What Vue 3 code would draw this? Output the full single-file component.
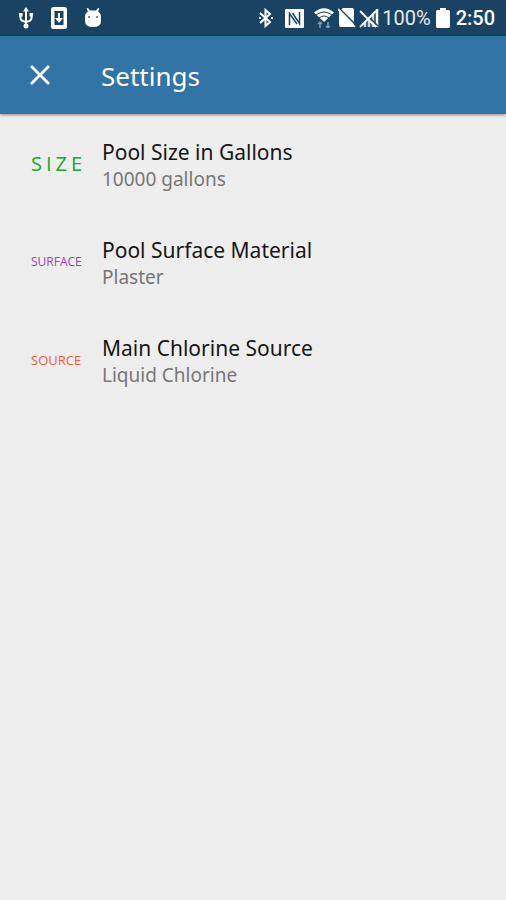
<script setup>
const settings = [
  { key: 'size', badge: 'SIZE', title: 'Pool Size in Gallons', value: '10000 gallons' },
  { key: 'surface', badge: 'SURFACE', title: 'Pool Surface Material', value: 'Plaster' },
  { key: 'source', badge: 'SOURCE', title: 'Main Chlorine Source', value: 'Liquid Chlorine' },
]
</script>

<template>
  <div class="screen">
    <div class="status">
      <div class="group left">
        <svg width="16" height="22" viewBox="0 0 16 22" fill="none" stroke="#fff" stroke-width="2">
          <path d="M8 3v15M2.500 8v3q0 3 5.500 4M13.500 8v3q0 3-5.500 4" />
          <path d="M8 0l3 4.500H5zM1 6h3.500v3.500H1zM11.500 6H15v3.500h-3.500z" fill="#fff" stroke="none" />
          <circle cx="8" cy="19" r="2.500" fill="#fff" stroke="none" />
        </svg>
        <svg width="16" height="22" viewBox="0 0 16 22">
          <rect width="16" height="22" rx="2.500" fill="#fff" />
          <path d="M3.500 4h9v14h-9z" fill="#194263" />
          <path d="M7 6h2v5h3l-4 5-4-5h3z" fill="#fff" />
        </svg>
        <svg width="18" height="20" viewBox="0 0 18 20">
          <path d="M1 9Q1 5 4 3.500L2.500.5 4 0l2 2.500h6L14 0l1.500.5L14 3.500Q17 5 17 9v4q0 6-8 6t-8-6z" fill="#fff" />
          <circle cx="5" cy="9" r="1" fill="#466982" />
          <circle cx="13" cy="9" r="1" fill="#466982" />
        </svg>
      </div>
      <div class="group right">
        <svg class="bluetooth" width="14" height="20" viewBox="0 0 14 20" fill="none" stroke="#fff" stroke-width="2">
          <path d="M1 5l10 9-4.500 4V2L11 6 1 15" />
          <path d="M0 9h2v2H0zM12 9h2v2h-2z" fill="#fff" stroke="none" />
        </svg>
        <svg class="nfc" width="19" height="19" viewBox="0 0 19 19">
          <rect width="19" height="19" rx="1" fill="#fff" />
          <path d="M4.500 16V4.500L12 15M7.500 4L14.500 14.500V3" fill="none" stroke="#194263" stroke-width="1.500" />
        </svg>
        <svg class="wifi" width="20" height="20" viewBox="0 0 20 20" fill="none">
          <path d="M0 4.500q10-8.500 20 0L10 14z" fill="#fff" />
          <path d="M2 7q8-6 16 0M5 10q5-4 10 0" stroke="#194263" stroke-width="1" />
          <path d="M6 20v-6M4 16l2-2 2 2M14 14v6M12 18l2 2 2-2" stroke="#7f9db4" stroke-width="1.500" />
        </svg>
        <svg class="sim" width="18" height="20" viewBox="0 0 18 20">
          <path d="M3 1.500L5 0h9q2 0 2 2v16q0 1-1 1H3q-2 0-2-2V4z" fill="#fff" />
          <path d="M2 1l16 16" stroke="#194263" stroke-width="1.500" />
          <path d="M0 1l17 18" stroke="#fff" stroke-width="1.800" />
        </svg>
        <svg class="signal" width="20" height="20" viewBox="0 0 20 20" fill="none">
          <path d="M6 19v-5M10 19V10M14 19V6" stroke="#cbd7e0" stroke-width="2.500" />
          <path d="M18 19V1" stroke="#fff" stroke-width="2.500" />
          <path d="M3 2l16 16" stroke="#194263" stroke-width="1.500" />
          <path d="M1 3l16 16M1 19L17 3" stroke="#fff" stroke-width="1.800" />
        </svg>
        <span class="percent">100%</span>
        <svg class="battery" width="14" height="20" viewBox="0 0 14 20" fill="#fff">
          <path d="M4 2V0h6v2h2.500q1.500 0 1.500 1.500v15q0 1.500-1.500 1.500h-11Q0 20 0 18.500v-15Q0 2 1.500 2z" />
        </svg>
        <time class="clock">2:50</time>
      </div>
    </div>
    <header class="bar">
      <button class="close" type="button" aria-label="Close">
        <svg width="20" height="20" viewBox="0 0 20 20" fill="none" stroke="#fff" stroke-width="2.800">
          <path d="M1 1l18 18M19 1L1 19" />
        </svg>
      </button>
      <h1>Settings</h1>
    </header>
    <main>
      <button v-for="item in settings" :key="item.key" class="row" type="button">
        <span class="badge" :class="item.key">{{ item.badge }}</span>
        <span class="text">
          <span class="title">{{ item.title }}</span>
          <span class="value">{{ item.value }}</span>
        </span>
      </button>
    </main>
  </div>
</template>

<style>
body {
  background: #eee;
}
</style>

<style scoped>
.screen {
  min-height: 100vh;
  background: #eee;
  font-family: "Noto Sans", "Open Sans", sans-serif;
}
.status {
  display: flex;
  justify-content: space-between;
  align-items: center;
  height: 36px;
  padding: 0 11px 0 18px;
  background: #194263;
  color: #fff;
  font-family: Roboto, sans-serif;
}
.group {
  display: flex;
  align-items: center;
}
.left {
  gap: 17px;
}
.nfc {
  margin-left: 12px;
}
.wifi {
  margin-left: 10px;
}
.sim {
  margin-left: 4px;
}
.signal {
  margin-left: 3px;
}
.percent {
  margin-left: 3px;
  font-size: 20px;
  line-height: 24px;
  color: #e3ebf1;
}
.battery {
  margin: 0 6px 0 5px;
}
.clock {
  font-size: 20px;
  line-height: 24px;
  font-weight: 500;
}
.bar {
  display: flex;
  align-items: center;
  height: 78px;
  padding-left: 20px;
  background: #3174a5;
  color: #fff;
  box-shadow: 0 1px 3px rgba(0, 0, 0, 0.4);
}
.close {
  display: flex;
  justify-content: center;
  align-items: center;
  width: 40px;
  height: 40px;
  margin-right: 41px;
  padding: 0;
  border: 0;
  background: none;
}
h1 {
  margin: 0;
  padding-top: 2px;
  font-size: 26px;
  font-weight: 400;
}
main {
  padding-top: 2px;
}
.row {
  display: flex;
  align-items: center;
  width: 100%;
  height: 98px;
  padding: 0 16px 0 31px;
  border: 0;
  background: none;
  font-family: inherit;
  text-align: left;
}
.badge {
  width: 71px;
  padding-bottom: 2px;
  font-family: "Open Sans", "Noto Sans", sans-serif;
  font-size: 12px;
  line-height: 20px;
  white-space: nowrap;
}
.size {
  color: #20a626;
  font-size: 20px;
  letter-spacing: 4px;
}
.surface {
  color: #9c3fbd;
}
.source {
  color: #f4593a;
  font-size: 13px;
}
.text {
  display: flex;
  flex-direction: column;
}
.title {
  color: #161616;
  font-size: 21px;
  line-height: 27px;
}
.value {
  color: #777;
  font-size: 19px;
  line-height: 26px;
}
</style>
